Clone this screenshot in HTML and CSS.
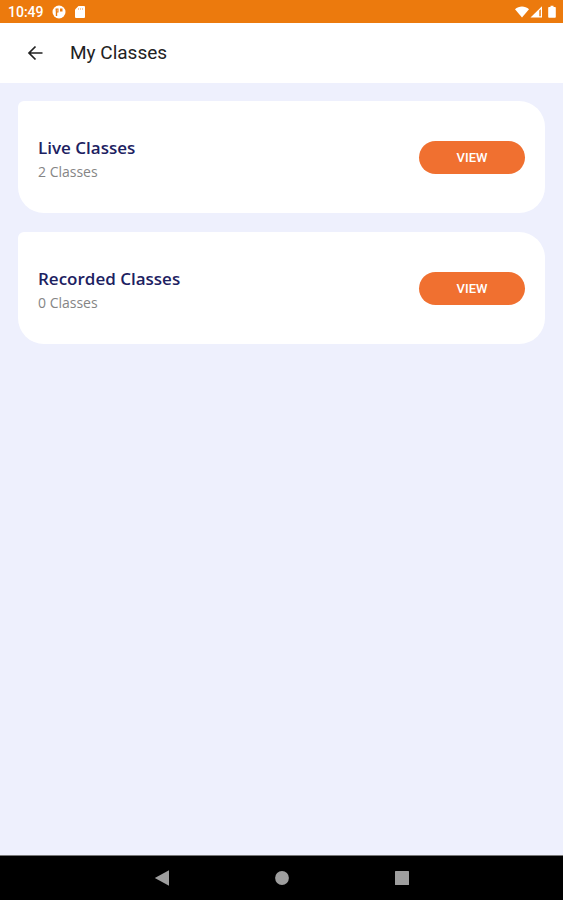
FILE: index.html
```html
<!DOCTYPE html>
<html lang="en">
<head>
<meta charset="utf-8">
<meta name="viewport" content="width=device-width, initial-scale=1">
<title>My Classes</title>
<link rel="stylesheet" href="styles.css">
</head>
<body>
<div class="status-bar">
  <div class="status-group">
    <time class="clock">10:49</time>
    <svg width="14" height="14" viewBox="0 0 14 14" aria-hidden="true">
      <circle cx="7" cy="7" r="6.500" fill="#fff"/>
      <path d="M3.500 3.500h3v4h-1.300v3.500H3.800V7.500M8 3.500h2.500v3H8z" fill="#ec7a0d"/>
      <path d="M4.800 4.500h1v2h-1z" fill="#f5b87c"/>
    </svg>
    <svg width="12" height="14" viewBox="0 0 12 14" aria-hidden="true">
      <path d="M4.500 1H10a1 1 0 0 1 1 1v10a1 1 0 0 1-1 1H2a1 1 0 0 1-1-1V4.500z" fill="#fff"/>
      <path d="M4.500 3v2M6.500 3v2M8.500 3v2" stroke="#ec7a0d" stroke-width=".4"/>
    </svg>
  </div>
  <div class="status-group">
    <svg width="42" height="14" viewBox="0 0 42 14" aria-hidden="true">
      <path d="M0 4.200C4 .5 10 .5 14 4.200L7 12.500z" fill="#fff"/>
      <path d="M15.500 12.500L27 1.200v11.300z" fill="#fff"/>
      <path d="M24.300 5.500v5.800h1.500V4.200z" fill="#ec7a0d"/>
      <path d="M34 2h1.500V.8h3V2H40a.8.8 0 0 1 .8.800V12a.8.8 0 0 1-.8.800h-6a.8.8 0 0 1-.8-.800V2.800A.8.800 0 0 1 34 2z" fill="#fff"/>
    </svg>
  </div>
</div>
<header class="app-bar">
  <button class="back" type="button" aria-label="Back">
    <svg width="16" height="16" viewBox="0 0 16 16" aria-hidden="true">
      <path d="M15.500 8H2M8.500 1.500L2 8l6.500 6.500" fill="none" stroke="#222" stroke-width="1.700"/>
    </svg>
  </button>
  <h1 class="title">My Classes</h1>
</header>
<main class="content">
  <section class="card">
    <div class="info">
      <h2 class="name">Live Classes</h2>
      <p class="count">2 Classes</p>
    </div>
    <button class="view" type="button">VIEW</button>
  </section>
  <section class="card">
    <div class="info">
      <h2 class="name">Recorded Classes</h2>
      <p class="count">0 Classes</p>
    </div>
    <button class="view" type="button">VIEW</button>
  </section>
</main>
<nav class="nav-bar" aria-label="System">
  <button class="nav-button" type="button" aria-label="Back">
    <svg width="16" height="16" viewBox="0 0 16 16" aria-hidden="true"><path d="M.8 8L15 .3v15.400z" fill="#9e9e9e"/></svg>
  </button>
  <button class="nav-button" type="button" aria-label="Home">
    <svg width="16" height="16" viewBox="0 0 16 16" aria-hidden="true"><circle cx="8" cy="8" r="6.900" fill="#9e9e9e"/></svg>
  </button>
  <button class="nav-button" type="button" aria-label="Recent apps">
    <svg width="16" height="16" viewBox="0 0 16 16" aria-hidden="true"><rect x="1" y="1" width="14" height="14" rx=".5" fill="#9e9e9e"/></svg>
  </button>
</nav>
</body>
</html>
```
FILE: styles.css
```css
* {
  box-sizing: border-box;
}

body {
  margin: 0;
  min-height: 100vh;
  display: flex;
  flex-direction: column;
  background: #eef0fd;
  font-family: Roboto, sans-serif;
}

h1, h2, p {
  margin: 0;
}

button {
  padding: 0;
  border: 0;
  background: none;
  font-family: inherit;
}

svg {
  display: block;
}

.status-bar {
  display: flex;
  justify-content: space-between;
  align-items: center;
  height: 23px;
  padding: 0 6px 0 8px;
  background: #ec7a0d;
  color: #fff;
}

.status-group {
  display: flex;
  align-items: center;
  gap: 8px;
}

.clock {
  font-size: 14px;
  font-weight: 500;
  line-height: 16px;
}

.app-bar {
  display: flex;
  align-items: center;
  gap: 27px;
  height: 60px;
  padding: 0 27px;
  background: #fff;
}

.title {
  color: #222;
  font-size: 19px;
  font-weight: 400;
  line-height: 24px;
}

.content {
  flex: 1;
  display: flex;
  flex-direction: column;
  gap: 19px;
  padding: 18px;
}

.card {
  display: flex;
  justify-content: space-between;
  align-items: center;
  min-height: 112px;
  padding: 20px;
  border-radius: 6px 26px 26px 26px;
  background: #fff;
}

.info {
  padding-top: 6px;
  font-family: "Open Sans", sans-serif;
}

.name {
  color: #1c2161;
  font-size: 17px;
  font-weight: 600;
  line-height: 24px;
}

.count {
  color: #858585;
  font-size: 14px;
  line-height: 24px;
}

.view {
  width: 106px;
  height: 33px;
  border-radius: 17px;
  background: #f07030;
  color: #fff;
  font-size: 13px;
  font-weight: 500;
}

.nav-bar {
  display: flex;
  justify-content: center;
  gap: 72px;
  height: 45px;
  border-top: 1px solid #777;
  background: #000;
}

.nav-button {
  display: flex;
  justify-content: center;
  align-items: center;
  width: 48px;
}
```
